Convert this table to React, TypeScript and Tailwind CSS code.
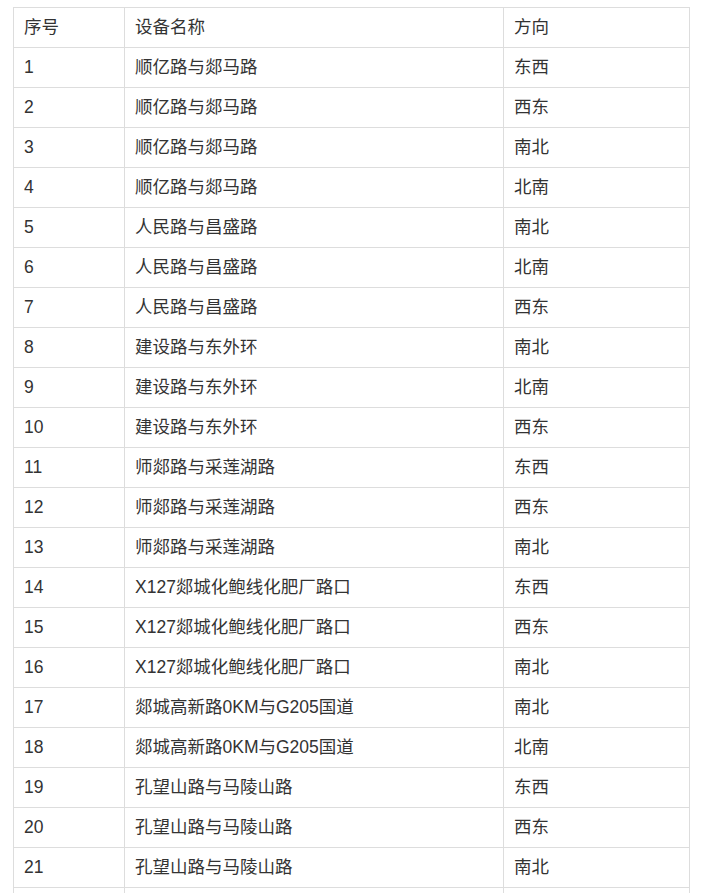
const rows: [string, string, string][] = [
  ["1", "顺亿路与郯马路", "东西"],
  ["2", "顺亿路与郯马路", "西东"],
  ["3", "顺亿路与郯马路", "南北"],
  ["4", "顺亿路与郯马路", "北南"],
  ["5", "人民路与昌盛路", "南北"],
  ["6", "人民路与昌盛路", "北南"],
  ["7", "人民路与昌盛路", "西东"],
  ["8", "建设路与东外环", "南北"],
  ["9", "建设路与东外环", "北南"],
  ["10", "建设路与东外环", "西东"],
  ["11", "师郯路与采莲湖路", "东西"],
  ["12", "师郯路与采莲湖路", "西东"],
  ["13", "师郯路与采莲湖路", "南北"],
  ["14", "X127郯城化鲍线化肥厂路口", "东西"],
  ["15", "X127郯城化鲍线化肥厂路口", "西东"],
  ["16", "X127郯城化鲍线化肥厂路口", "南北"],
  ["17", "郯城高新路0KM与G205国道", "南北"],
  ["18", "郯城高新路0KM与G205国道", "北南"],
  ["19", "孔望山路与马陵山路", "东西"],
  ["20", "孔望山路与马陵山路", "西东"],
  ["21", "孔望山路与马陵山路", "南北"],
  ["", "", ""],
];

export default function App() {
  return (
    <div className="bg-white pt-[7px] pl-[13px] font-['Liberation_Sans','Noto_Sans_CJK_SC',sans-serif] text-[17.5px] text-[#333]">
      <table className="w-[676px] table-fixed border-collapse">
        <colgroup>
          <col className="w-[111px]" />
          <col className="w-[379px]" />
          <col className="w-[186px]" />
        </colgroup>
        <thead>
          <tr>
            <th className="h-[40px] border border-[#ddd] px-[10px] text-left font-normal">序号</th>
            <th className="h-[40px] border border-[#ddd] px-[10px] text-left font-normal">设备名称</th>
            <th className="h-[40px] border border-[#ddd] px-[10px] text-left font-normal">方向</th>
          </tr>
        </thead>
        <tbody>
          {rows.map(([n, name, dir], i) => (
            <tr key={i}>
              <td className="h-[40px] border border-[#ddd] px-[10px]">{n}</td>
              <td className="h-[40px] border border-[#ddd] px-[10px]">{name}</td>
              <td className="h-[40px] border border-[#ddd] px-[10px]">{dir}</td>
            </tr>
          ))}
        </tbody>
      </table>
    </div>
  );
}
